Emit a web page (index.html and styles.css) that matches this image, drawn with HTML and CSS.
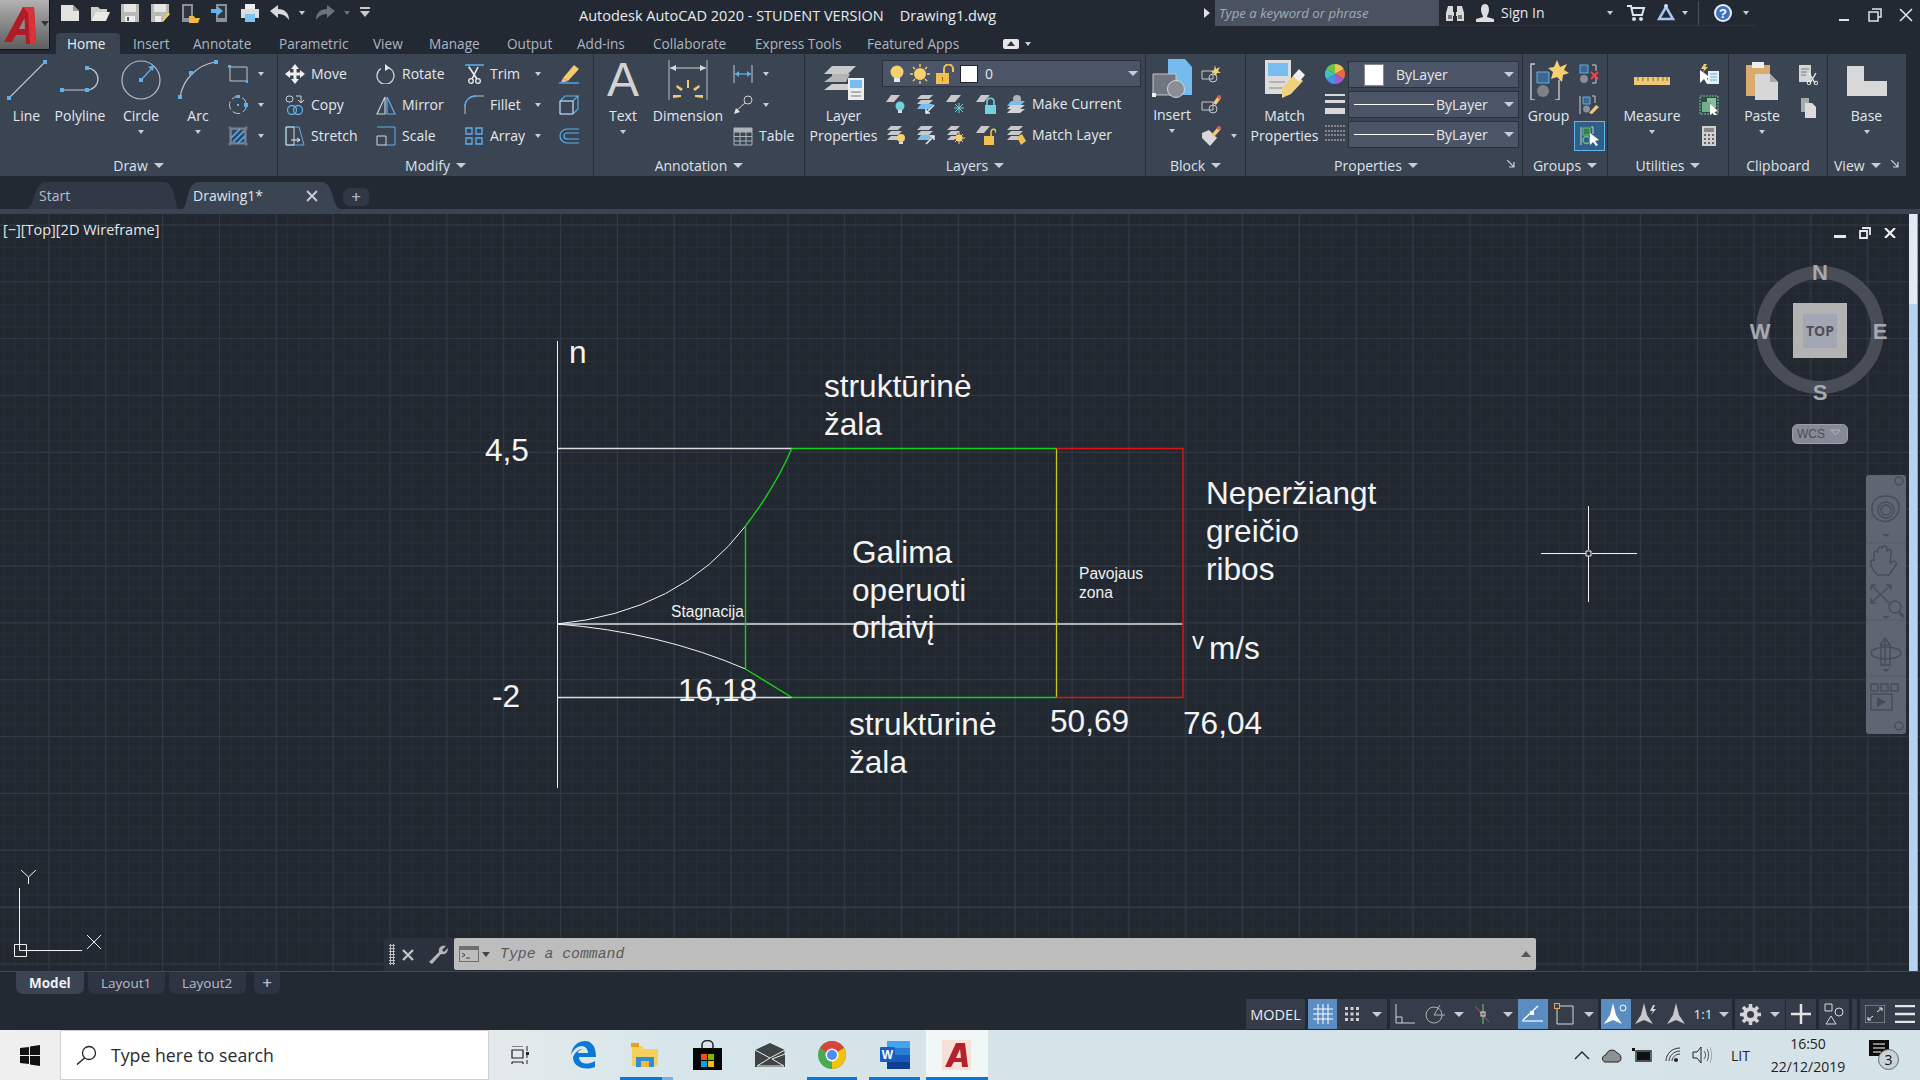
FILE: index.html
```html
<!DOCTYPE html>
<html lang="en">
<head>
<meta charset="utf-8">
<title>Autodesk AutoCAD 2020</title>
<link rel="stylesheet" href="styles.css">
</head>
<body>
<div class="app">

<header class="titlebar">
  <div class="logo">
    <svg width="36" height="42" viewBox="0 0 36 42"><path d="M1 38 L20 3 H31 L33 40 H23 L22.500 31 H13 L9 38Z" fill="#b01c26"/><path d="M20 3 H31 L33 40 H27 L25 9 Z" fill="#d8323a"/><path d="M16 25 H22 L21.500 14Z" fill="#8b8b8b"/></svg>
    <span class="caret dark"></span>
  </div>
  <div class="qa">
    <svg class="i20" viewBox="0 0 20 20"><path d="M1 2H13L19 8V18H1Z" fill="#e3e3df"/><path d="M13 2V8H19" fill="#9a9a96"/></svg>
    <svg class="i20" viewBox="0 0 20 20"><path d="M1 4H8L10 6H17V9H5L1 18Z" fill="#cfcfcb"/><path d="M5 9H20L16 18H1Z" fill="#e9e9e5"/></svg>
    <svg class="i20" viewBox="0 0 20 20"><path d="M1 1H19V19H1Z" fill="#b9b9b5"/><path d="M4 1H16V9H4Z" fill="#e6e6e2"/><path d="M5 13H15V19H5Z" fill="#ececec"/><path d="M7 14H9V18H7Z" fill="#555"/></svg>
    <svg class="i20" viewBox="0 0 20 20"><path d="M1 1H19V12L12 19H1Z" fill="#b9b9b5"/><path d="M4 1H16V9H4Z" fill="#e6e6e2"/><path d="M5 13H11V19H5Z" fill="#ececec"/><path d="M11 18L18 9L20 11L13 19Z" fill="#f2c268"/></svg>
    <svg class="i20" viewBox="0 0 20 20"><path d="M2 1H13V19H2Z" fill="#8d9095"/><path d="M4 3H11V15H4Z" fill="#30363f"/><path d="M9 13H14L15 15H20L18 20H9Z" fill="#f0b840"/></svg>
    <svg class="i20" viewBox="0 0 20 20"><path d="M6 1H17V19H6Z" fill="#8d9095"/><path d="M8 3H15V15H8Z" fill="#30363f"/><path d="M1 6H7V3L13 8L7 13V10H1Z" fill="#5fb4ee"/></svg>
    <svg class="i20" viewBox="0 0 20 20"><path d="M5 1H15V6H5Z" fill="#eee"/><path d="M1 6H19V15H1Z" fill="#dcdcdc"/><path d="M5 11H15V19H5Z" fill="#7cc3f2"/></svg>
    <svg class="i20" viewBox="0 0 20 20"><path d="M0 8L8 2V6C15 6 19 10 19 17C16 13 13 11 8 11V15Z" fill="#d8d8d8"/></svg>
    <span class="caret m4"></span>
    <svg class="i20 gap-l" viewBox="0 0 20 20"><path d="M20 8L12 2V6C5 6 1 10 1 17C4 13 7 11 12 11V15Z" fill="#6c727b"/></svg>
    <span class="caret dim m4"></span>
    <svg class="i10 gap-m" viewBox="0 0 10 12"><path d="M0 0H10V2H0Z M0 4H10L5 10Z" fill="#c9c9c9"/></svg>
  </div>
  <div class="window-title"><span>Autodesk AutoCAD 2020 - STUDENT VERSION</span><span>Drawing1.dwg</span></div>
  <div class="title-right">
    <span class="tri-r"></span>
    <div class="search">Type a keyword or phrase</div>
    <div class="userbar">
      <svg class="i20" viewBox="0 0 20 20"><path d="M3 3H8V9H9V13H8V18H1V10Z M12 3H17L19 10V18H12V13H11V9H12Z" fill="#d8d8d8"/><path d="M3 12H7V16H3Z M13 12H17V16H13Z" fill="#777"/></svg>
      <svg class="i20" viewBox="0 0 20 20"><path d="M10 1C13 1 14 4 14 7C14 10 12 12 12 14L19 16V19H1V16L8 14C8 12 6 10 6 7C6 4 7 1 10 1Z" fill="#dedede"/></svg>
      <span class="signin">Sign In</span>
      <span class="caret"></span>
      <svg class="i20 cart" viewBox="0 0 20 20"><path d="M1 3H5L7 12H16L18 5H6" fill="none" stroke="#dfe6ee" stroke-width="2"/><circle cx="8" cy="16" r="2" fill="#cfe0f2"/><circle cx="15" cy="16" r="2" fill="#cfe0f2"/></svg>
      <svg class="i20" viewBox="0 0 20 20"><path d="M10 4L17 16H3Z" fill="none" stroke="#a9c6ec" stroke-width="2.500"/><circle cx="10" cy="3" r="2" fill="#cfe0f2"/></svg>
      <span class="caret tri-c"></span>
      <i class="vsep"></i>
      <svg class="i20" viewBox="0 0 20 20"><circle cx="10" cy="10" r="9" fill="#e9eef5"/><circle cx="10" cy="10" r="7" fill="#3f6fc0"/><text x="10" y="15" class="qmark">?</text></svg>
      <span class="caret"></span>
    </div>
    <div class="winbtns">
      <svg class="i14" viewBox="0 0 14 14"><path d="M2 11H12V13H2Z" fill="#dfe3e8"/></svg>
      <svg class="i14" viewBox="0 0 14 14"><path d="M4 1H13V9H10M1 4H10V13H1Z" fill="none" stroke="#dfe3e8" stroke-width="1.500"/></svg>
      <svg class="i14" viewBox="0 0 14 14"><path d="M1 1L13 13M13 1L1 13" stroke="#e6eaee" stroke-width="1.500"/></svg>
    </div>
  </div>
</header>

<nav class="ribbon-tabs">
  <span class="rtab on">Home</span><span class="rtab">Insert</span><span class="rtab">Annotate</span><span class="rtab">Parametric</span><span class="rtab">View</span><span class="rtab">Manage</span><span class="rtab">Output</span><span class="rtab">Add-ins</span><span class="rtab">Collaborate</span><span class="rtab">Express Tools</span><span class="rtab">Featured Apps</span>
  <span class="rtab-more"><svg width="16" height="10" viewBox="0 0 16 10"><rect width="16" height="10" rx="2" fill="#e6e6e6"/><path d="M8 2L12 7H4Z" fill="#333"/></svg><span class="caret"></span></span>
</nav>

<section class="ribbon">

  <div class="panel draw">
    <div class="body">
      <div class="big"><svg class="i40" viewBox="0 0 40 40"><path d="M2 38L38 2" stroke="#b7bcc3" stroke-width="1.200"/><path d="M0 36H4V40H0Z M36 0H40V4H36Z" fill="#5db0ec"/></svg><span class="lb">Line</span></div>
      <div class="big"><svg class="i40" viewBox="0 0 40 40"><path d="M2 30H27A11 11 0 0 0 27 8" fill="none" stroke="#c6cacf" stroke-width="1.200"/><path d="M0 28H4V32H0Z M25 28H29V32H25Z M25 6H29V10H25Z" fill="#5db0ec"/></svg><span class="lb">Polyline</span></div>
      <div class="big"><svg class="i40" viewBox="0 0 40 40"><circle cx="20" cy="20" r="19" fill="none" stroke="#b7bcc3" stroke-width="1.200"/><path d="M20 20L32 7" stroke="#5db0ec" stroke-width="1.300"/><path d="M33 5L32 11L27 7Z M18 18H22V22H18Z" fill="#5db0ec"/></svg><span class="lb">Circle</span><span class="caret"></span></div>
      <div class="big"><svg class="i40" viewBox="0 0 40 40"><path d="M2 37C5 20 18 5 38 2" fill="none" stroke="#c0c4ca" stroke-width="1.200"/><path d="M0 35H4V39H0Z M11 11H15V15H11Z M36 0H40V4H36Z" fill="#5db0ec"/></svg><span class="lb">Arc</span><span class="caret"></span></div>
      <div class="stack pad7">
        <div class="tool"><svg class="i20" viewBox="0 0 20 20"><path d="M2 3H19V17H2Z" fill="none" stroke="#c0c4ca"/><path d="M0 1H3V4H0Z M18 16H21V19H18Z" fill="#5db0ec"/></svg><span class="caret m4"></span></div>
        <div class="tool"><svg class="i20" viewBox="0 0 20 20"><circle cx="10" cy="10" r="8.500" fill="none" stroke="#c0c4ca" stroke-dasharray="8 3"/><path d="M9 9H11V11H9Z M16 8H20V12H16Z" fill="#5db0ec"/><path d="M8 0H12V3H8Z" fill="#5db0ec"/></svg><span class="caret m4"></span></div>
        <div class="tool"><svg class="i20" viewBox="0 0 20 20"><path d="M3 3H17V17H3Z" fill="#2d4a6a" stroke="#9aa0a8"/><path d="M3 12L12 3M5 16L16 5M10 17L17 10" stroke="#5db0ec" stroke-width="1.500"/><path d="M0 2H20M2 0V20M18 0V20M0 18H20" stroke="#9aa0a8" stroke-width=".7"/></svg><span class="caret m4"></span></div>
      </div>
    </div>
    <div class="pt">Draw<span class="caret lg"></span></div>
  </div>

  <div class="panel modify">
    <div class="body grid-tools">
      <div class="tool"><svg class="i20" viewBox="0 0 20 20"><path d="M10 0L14 5H11.500V8.500H15V6L20 10L15 14V11.500H11.500V15H14L10 20L6 15H8.500V11.500H5V14L0 10L5 6V8.500H8.500V5H6Z" fill="#f0f0f0"/></svg><span>Move</span></div>
      <div class="tool"><svg class="i20" viewBox="0 0 20 20"><path d="M13 4A8.500 8.500 0 1 1 5 4.500" fill="none" stroke="#cfd2d6" stroke-width="1.300"/><path d="M9 0L14 4L9 7Z" fill="#e6e6e6"/></svg><span>Rotate</span></div>
      <div class="tool"><svg class="i20" viewBox="0 0 20 20"><path d="M1 1H20" stroke="#5db0ec" stroke-width="1.500"/><path d="M5 1V5" stroke="#5db0ec"/><path d="M5 3L13 15M14 3L8 15" stroke="#ededed" stroke-width="1.600"/><circle cx="7" cy="17" r="2.300" fill="none" stroke="#ededed" stroke-width="1.300"/><circle cx="14" cy="17" r="2.300" fill="none" stroke="#ededed" stroke-width="1.300"/></svg><span>Trim</span><span class="caret push"></span></div>
      <div class="tool"><svg class="i20" viewBox="0 0 20 20"><path d="M4 14L15 1L20 5L9 17Z" fill="#f3c96b"/><path d="M4 14L9 17L6 18H2Z" fill="#f1b5a5"/><path d="M0 19H20" stroke="#5db0ec" stroke-width="1.300"/></svg></div>

      <div class="tool"><svg class="i20" viewBox="0 0 20 20"><rect x="1" y="1" width="7" height="6" rx="3" fill="none" stroke="#d0d0d0"/><path d="M11 1H16V7M13 5L16 8L19 5" fill="none" stroke="#d8d8d8"/><circle cx="7" cy="15" r="4.500" fill="none" stroke="#5db0ec" stroke-width="1.300"/><circle cx="13" cy="15" r="4.500" fill="none" stroke="#5db0ec" stroke-width="1.300"/></svg><span>Copy</span></div>
      <div class="tool"><svg class="i20" viewBox="0 0 20 20"><path d="M9 2V19H1Z" fill="none" stroke="#d0d0d0" stroke-width="1.200"/><path d="M11 2V19H19Z" fill="none" stroke="#5db0ec" stroke-width="1.200"/></svg><span>Mirror</span></div>
      <div class="tool"><svg class="i20" viewBox="0 0 20 20"><path d="M1 19V11C1 5 6 1 12 1H20" fill="none" stroke="#c0c4ca"/><path d="M1 12C1 5 6 1 12 1" fill="none" stroke="#5db0ec" stroke-width="1.300"/></svg><span>Fillet</span><span class="caret push"></span></div>
      <div class="tool"><svg class="i20" viewBox="0 0 20 20"><path d="M1 6H14V19H1Z M1 6L6 1H19L14 6M19 1V14L14 19" fill="none" stroke="#5db0ec" stroke-width="1.100"/><path d="M1 6H14V19H1Z" fill="none" stroke="#c5c9ce"/></svg></div>

      <div class="tool"><svg class="i20" viewBox="0 0 20 20"><path d="M1 1H14L19 19H1Z" fill="none" stroke="#5db0ec"/><path d="M1 1H9V19H1Z" fill="none" stroke="#d8d8d8"/><path d="M6 14H15M12 12L15 14L12 16" fill="none" stroke="#ededed"/></svg><span>Stretch</span></div>
      <div class="tool"><svg class="i20" viewBox="0 0 20 20"><path d="M1 1H19V19H9" fill="none" stroke="#5db0ec"/><path d="M1 10H10V19H1Z" fill="none" stroke="#d8d8d8"/></svg><span>Scale</span></div>
      <div class="tool"><svg class="i20" viewBox="0 0 20 20"><path d="M2 2H8V8H2Z M12 2H18V8H12Z M12 12H18V18H12Z" fill="none" stroke="#5db0ec" stroke-width="1.300"/><path d="M2 12H8V18H2Z" fill="none" stroke="#5db0ec" stroke-width="1.300"/></svg><span>Array</span><span class="caret push"></span></div>
      <div class="tool"><svg class="i20" viewBox="0 0 20 20"><path d="M20 3H8A7 7 0 0 0 8 17H20M20 7H8A3 3 0 0 0 8 13H20" fill="none" stroke="#5db0ec" stroke-width="1.200"/></svg></div>
    </div>
    <div class="pt">Modify<span class="caret lg"></span></div>
  </div>

  <div class="panel annotation">
    <div class="body">
      <div class="big"><span class="glyph-a">A</span><span class="lb">Text</span><span class="caret"></span></div>
      <div class="big"><svg class="i40" viewBox="0 0 40 40"><path d="M1 0V40M39 0V40" stroke="#b7bcc3"/><path d="M2 8H38" stroke="#d0d0d0"/><path d="M2 8L8 5V11Z M38 8L32 5V11Z" fill="#d8d8d8"/><path d="M19 20H21L21 28H19Z" fill="#f3c96b"/><path d="M9 25L15 29L13 31L8 27Z M31 25L25 29L27 31L32 27Z M5 35H13V37L5 38Z M35 35H27V37L35 38Z" fill="#f3c96b"/></svg><span class="lb">Dimension</span></div>
      <div class="stack pad9">
        <div class="tool"><svg class="i20" viewBox="0 0 20 20"><path d="M1 1V19M19 1V19" stroke="#c5c9ce"/><path d="M2 10H18" stroke="#5db0ec" stroke-width="1.300"/><path d="M2 10L6 7V13Z M18 10L14 7V13Z" fill="#5db0ec"/></svg><span class="caret m4"></span></div>
        <div class="tool"><svg class="i20" viewBox="0 0 20 20"><circle cx="15" cy="5" r="4" fill="none" stroke="#d0d0d0"/><path d="M12 8L3 16" stroke="#d0d0d0"/><path d="M1 19L3 13L7 17Z" fill="#e0e0e0"/></svg><span class="caret m4"></span></div>
        <div class="tool"><svg class="i20" viewBox="0 0 20 20"><path d="M1 2H19V19H1Z M1 6H19M1 10.500H19M1 15H19M7 6V19M13 6V19" fill="none" stroke="#aeb2b8"/><path d="M1 2H19V6H1Z" fill="#aeb2b8"/></svg><span>Table</span></div>
      </div>
    </div>
    <div class="pt">Annotation<span class="caret lg"></span></div>
  </div>

  <div class="panel layers">
    <div class="body">
      <div class="big"><svg class="i40" viewBox="0 0 40 40"><path d="M8 6H32L24 14H0Z" fill="#c9c9c9"/><path d="M8 14H26L22 22H0L8 16Z" fill="#b5b5b5"/><path d="M8 24H24V30H0Z" fill="#d0d0d0"/><path d="M24 18H40V40H24Z" fill="#ededed"/><path d="M26 20H38V28H26Z" fill="#76bdf0"/><path d="M27 32H37M27 36H37" stroke="#777"/></svg><span class="lb tight">Layer<br>Properties</span></div>
      <div class="layer-col">
        <div class="combo layer-combo">
          <svg class="i16" viewBox="0 0 16 18"><circle cx="8" cy="7" r="6.500" fill="#f7d070"/><path d="M5 13H11V17H5Z" fill="#e6e6e6"/></svg>
          <svg class="i20" viewBox="0 0 20 20"><circle cx="10" cy="10" r="6" fill="#f7d070"/><path d="M10 0V3M10 17V20M0 10H3M17 10H20M3 3L5 5M15 15L17 17M17 3L15 5M5 15L3 17" stroke="#f7d070" stroke-width="1.400"/></svg>
          <svg class="i20" viewBox="0 0 20 20"><path d="M1 9H14V20H1Z" fill="#f0c14e"/><path d="M9 9V5C9 -1 18 -1 18 5V8" fill="none" stroke="#f0c14e" stroke-width="2"/><path d="M7 13H8V17H7Z" fill="#8a6a20"/></svg>
          <span class="swatch"></span><span class="num">0</span><span class="caret lg push"></span>
        </div>
        <div class="layer-row">
          <svg class="i20" viewBox="0 0 20 20"><path d="M5 1H14L8 8H0Z" fill="#c9c9c9"/><circle cx="14" cy="12" r="4.500" fill="#6fd2e0"/><path d="M12 16H16V19H12Z" fill="#ddd"/></svg>
          <svg class="i20" viewBox="0 0 20 20"><path d="M5 1H17L13 5H1Z M5 6H17L13 10H1Z" fill="#c9c9c9"/><path d="M5 10H17L13 15H1Z" fill="#76bdf0"/><path d="M18 11L10 19M10 15V19H14" stroke="#eee" stroke-width="1.500" fill="none"/></svg>
          <svg class="i20" viewBox="0 0 20 20"><path d="M5 1H15L9 8H0Z" fill="#c9c9c9"/><path d="M13 9V19M8 14H18M9 10L17 18M17 10L9 18" stroke="#6fd2e0"/></svg>
          <svg class="i20" viewBox="0 0 20 20"><path d="M5 1H14L8 8H0Z" fill="#c9c9c9"/><path d="M9 11H20V20H9Z" fill="#6fd2e0"/><path d="M11 11V8C11 3 18 3 18 8V11" fill="none" stroke="#6fd2e0" stroke-width="1.600"/></svg>
          <svg class="i20" viewBox="0 0 20 20"><circle cx="11" cy="5" r="4" fill="#aeb2b8"/><path d="M5 7H19L14 12H1Z" fill="#76bdf0"/><path d="M5 11H19L14 15H1Z M5 15H19L14 19H1Z" fill="#d5d5d5"/></svg>
          <span class="lr-text">Make Current</span>
        </div>
        <div class="layer-row">
          <svg class="i20" viewBox="0 0 20 20"><path d="M5 1H16L12 5H1Z M5 6H16L12 10H1Z M5 11H16L12 15H1Z" fill="#c9c9c9"/><circle cx="15" cy="13" r="4" fill="#f7d070"/><path d="M13 17H17V19H13Z" fill="#ddd"/></svg>
          <svg class="i20" viewBox="0 0 20 20"><path d="M5 1H17L13 5H1Z M5 6H17L13 10H1Z" fill="#c9c9c9"/><path d="M5 10H17L13 15H1Z" fill="#76bdf0"/><path d="M10 19L18 11M14 11H18V15" stroke="#eee" stroke-width="1.500" fill="none"/></svg>
          <svg class="i20" viewBox="0 0 20 20"><path d="M5 1H14L10 5H1Z M5 6H14L10 10H1Z M5 11H12L8 15H1Z" fill="#c9c9c9"/><circle cx="13" cy="13" r="3.500" fill="#f7d070"/><path d="M13 7V19M7 13H19M9 9L17 17M17 9L9 17" stroke="#f7d070"/></svg>
          <svg class="i20" viewBox="0 0 20 20"><path d="M5 1H14L8 8H0Z" fill="#c9c9c9"/><path d="M8 11H18V20H8Z" fill="#f0c14e"/><path d="M15 11V8C15 3 20 3 20 8" fill="none" stroke="#f0c14e" stroke-width="1.600"/></svg>
          <svg class="i20" viewBox="0 0 20 20"><path d="M5 1H17L13 5H1Z M5 6H17L13 10H1Z M5 11H17L13 15H1Z" fill="#c9c9c9"/><path d="M11 12L16 9L20 16L15 20Z" fill="#f0c14e"/></svg>
          <span class="lr-text">Match Layer</span>
        </div>
      </div>
    </div>
    <div class="pt">Layers<span class="caret lg"></span></div>
  </div>

  <div class="panel block">
    <div class="body">
      <div class="big insert"><svg class="i40" viewBox="0 0 40 40"><path d="M16 0H33L40 8V36H16Z" fill="#74bbf0"/><path d="M1 15H24V36H1Z" fill="#717780" stroke="#c8c8c8"/><circle cx="24" cy="30" r="8.500" fill="#8a8f96" stroke="#d8d8d8"/><path d="M0 34H4V38H0Z" fill="#eee"/></svg><span class="lb">Insert</span><span class="caret"></span></div>
      <div class="stack pad3">
        <div class="tool"><svg class="i20" viewBox="0 0 20 20"><path d="M1 7H12V15H1Z" fill="none" stroke="#c8c8c8"/><circle cx="12" cy="14" r="4" fill="none" stroke="#c8c8c8"/><path d="M14 1L15 5L19 3L17 7L20 9L16 9L15 12L13 9L10 8L13 6Z" fill="#f7d070"/></svg></div>
        <div class="tool"><svg class="i20" viewBox="0 0 20 20"><path d="M1 7H12V15H1Z" fill="none" stroke="#c8c8c8"/><circle cx="12" cy="14" r="4" fill="none" stroke="#c8c8c8"/><path d="M12 8L17 1L20 3L15 10Z" fill="#f3c96b"/><circle cx="18" cy="2" r="2" fill="#e05a5a"/></svg></div>
        <div class="tool"><svg class="i20" viewBox="0 0 20 20"><path d="M1 7L8 4L16 12L9 20L1 12Z" fill="#d8d8d8"/><path d="M10 9L17 1L20 3L13 11Z" fill="#f3c96b"/><circle cx="18" cy="2" r="2" fill="#e05a5a"/></svg><span class="caret m4"></span></div>
      </div>
    </div>
    <div class="pt">Block<span class="caret lg"></span></div>
  </div>

  <div class="panel properties">
    <div class="body">
      <div class="big"><svg class="i40" viewBox="0 0 40 40"><path d="M0 0H26V34H0Z" fill="#dcdcdc"/><path d="M3 3H23V16H3Z" fill="#76bdf0"/><path d="M4 22H20M4 28H20" stroke="#888"/><path d="M17 28L30 14L38 21L26 34L17 38Z" fill="#f0d27a"/><path d="M28 16L34 9L40 15L34 22Z" fill="#eee"/></svg><span class="lb tight">Match<br>Properties</span></div>
      <div class="prop-grid">
        <svg class="i20" viewBox="0 0 20 20"><path d="M10 10L10 0A10 10 0 0 1 18.700 5Z" fill="#f2c14e"/><path d="M10 10L18.700 5A10 10 0 0 1 18.700 15Z" fill="#e8684a"/><path d="M10 10L18.700 15A10 10 0 0 1 10 20Z" fill="#a05ad0"/><path d="M10 10L10 20A10 10 0 0 1 1.300 15Z" fill="#4a8fe0"/><path d="M10 10L1.300 15A10 10 0 0 1 1.300 5Z" fill="#42c0c8"/><path d="M10 10L1.300 5A10 10 0 0 1 10 0Z" fill="#6cc24a"/></svg>
        <div class="combo pc"><span class="swatch big-sw"></span><span class="bl-1">ByLayer</span><span class="caret lg push"></span></div>
        <svg class="i20" viewBox="0 0 20 20"><path d="M0 0H20V2H0Z M0 6H20V9H0Z M0 14H20V20H0Z" fill="#d8d8d8"/></svg>
        <div class="combo pc"><i class="ln"></i><span>ByLayer</span><span class="caret lg push"></span></div>
        <svg class="i20" viewBox="0 0 20 20"><path d="M0 2H20M0 7H20M0 11H20M0 16H20" stroke="#9a9a9a" stroke-dasharray="2 1" stroke-width="1.300"/></svg>
        <div class="combo pc"><i class="ln"></i><span>ByLayer</span><span class="caret lg push"></span></div>
      </div>
    </div>
    <div class="pt shift">Properties<span class="caret lg"></span><svg class="launch" width="8" height="8" viewBox="0 0 8 8"><path d="M0 0L7 7M7 2V7H2" fill="none" stroke="#ccd" stroke-width="1.200"/></svg></div>
  </div>

  <div class="panel groups">
    <div class="body">
      <div class="big"><svg class="i40" viewBox="0 0 40 40"><path d="M6 4H2V40H6M26 40H30V20" fill="none" stroke="#d0d0d0" stroke-width="1.300"/><path d="M8 12H20V23H8Z" fill="#3d678f" stroke="#5db0ec"/><circle cx="14" cy="31" r="6" fill="#7d8288"/><path d="M28 0L31 7L38 4L35 10L40 13L34 15L33 22L28 17L22 19L24 12L19 8L25 7Z" fill="#f7d070"/></svg><span class="lb">Group</span></div>
      <div class="stack pad5">
        <div class="tool"><svg class="i20" viewBox="0 0 20 20"><path d="M1 1H9V9H1Z" fill="#3d678f" stroke="#5db0ec"/><circle cx="5" cy="15" r="4" fill="#8a8f96"/><path d="M13 1H17V7M17 13V19H13" fill="none" stroke="#d0d0d0"/><path d="M12 8L19 15M19 8L12 15" stroke="#e64a4a" stroke-width="1.800"/></svg></div>
        <div class="tool"><svg class="i20" viewBox="0 0 20 20"><path d="M1 1V19M13 1H16V8" fill="none" stroke="#d0d0d0"/><path d="M4 2H11V9H4Z" fill="#3d678f" stroke="#5db0ec"/><circle cx="7.500" cy="14" r="3.500" fill="#8a8f96"/><path d="M10 18L17 10L20 12L13 19Z" fill="#f3c96b"/></svg></div>
        <div class="tool sel"><svg class="i20" viewBox="0 0 20 20"><path d="M2 1V19M12 1H14V8" fill="none" stroke="#d0d0d0"/><path d="M4 2H11V9H4Z" fill="#3d7a4d" stroke="#60c080"/><circle cx="7.500" cy="14" r="3.500" fill="none" stroke="#60c080" stroke-width="1.500"/><path d="M11 7V19L14 16L17 20L19 19L16 15L20 14Z" fill="#fff"/></svg></div>
      </div>
    </div>
    <div class="pt">Groups<span class="caret lg"></span></div>
  </div>

  <div class="panel utilities">
    <div class="body">
      <div class="big"><svg class="i40 wide" viewBox="0 0 40 40"><path d="M2 17H38V25H2Z" fill="#f0c678"/><path d="M6 17V21M11 17V21M16 17V21M21 17V21M26 17V21M31 17V21M35 17V21" stroke="#8a6a30"/></svg><span class="lb">Measure</span><span class="caret"></span></div>
      <div class="stack pad3">
        <div class="tool"><svg class="i20" viewBox="0 0 20 20"><path d="M9 7H20V20H9Z" fill="#e8eef3"/><path d="M11 10H18M11 13H18M11 16H18" stroke="#5db0ec"/><path d="M1 6V19L5 15L8 20L10 19L8 14H12Z" fill="#fff"/><path d="M5 0L2 5H5L4 8L9 3H6L8 0Z" fill="#f7d070"/></svg></div>
        <div class="tool"><svg class="i20" viewBox="0 0 20 20"><path d="M1 1H19V19H1Z" fill="none" stroke="#5fcf80" stroke-dasharray="2 1"/><path d="M8 3H17V13H8Z" fill="#8dbd9c"/><path d="M3 7H12V17H3Z" fill="#6fb084"/><path d="M11 9V20L13.500 18L16 21L18 20L15.500 17L19 16Z" fill="#fff"/></svg></div>
        <div class="tool"><svg class="i20" viewBox="0 0 20 20"><path d="M3 0H17V20H3Z" fill="#d0d0d0"/><path d="M5 2H15V6H5Z" fill="#888"/><path d="M5 8H7V10H5Z M9 8H11V10H9Z M13 8H15V10H13Z M5 12H7V14H5Z M9 12H11V14H9Z M13 12H15V14H13Z M5 16H7V18H5Z M9 16H11V18H9Z M13 16H15V18H13Z" fill="#666"/></svg></div>
      </div>
    </div>
    <div class="pt">Utilities<span class="caret lg"></span></div>
  </div>

  <div class="panel clipboard">
    <div class="body">
      <div class="big"><svg class="i40" viewBox="0 0 40 40"><path d="M4 5H28V36H4Z" fill="#d9ab6d"/><path d="M10 2H22V8H10Z" fill="#ededed"/><path d="M13 14H28L36 22V40H13Z" fill="#d7d7d7"/><path d="M28 14V22H36" fill="#a9a9a9"/></svg><span class="lb">Paste</span><span class="caret"></span></div>
      <div class="stack pad3 clip-stack">
        <div class="tool"><svg class="i20" viewBox="0 0 20 20"><path d="M1 0H13V17H1Z" fill="#d5d5d5"/><path d="M3 4H11M3 7H9M3 10H8" stroke="#777"/><path d="M11 8L17 18M18 8L12 18" stroke="#eee" stroke-width="1.400"/><circle cx="11" cy="18" r="1.800" fill="none" stroke="#eee"/><circle cx="18" cy="18" r="1.800" fill="none" stroke="#eee"/></svg></div>
        <div class="tool"><svg class="i20" viewBox="0 0 20 20"><path d="M3 0H11V14H3Z" fill="#aaa"/><path d="M7 5H14L18 9V20H7Z" fill="#dcdcdc"/></svg></div>
      </div>
    </div>
    <div class="pt">Clipboard</div>
  </div>

  <div class="panel viewp">
    <div class="body">
      <div class="big"><svg class="i40" viewBox="0 0 40 40"><path d="M0 6H17V21H40V36H0Z" fill="#d8d8d8"/></svg><span class="lb">Base</span><span class="caret"></span></div>
    </div>
    <div class="pt left">View<span class="caret lg"></span><svg class="launch" width="8" height="8" viewBox="0 0 8 8"><path d="M0 0L7 7M7 2V7H2" fill="none" stroke="#ccd" stroke-width="1.200"/></svg></div>
  </div>

</section>

<div class="doc-tabs">
  <div class="dtab start">Start</div>
  <div class="dtab cur">Drawing1*<svg class="dx" width="12" height="12" viewBox="0 0 12 12"><path d="M1 1L11 11M11 1L1 11" stroke="#c6cad0" stroke-width="2"/></svg></div>
  <div class="dtab plus">+</div>
</div>
<div class="strip"></div>

<main class="canvas">
  <svg class="cad" viewBox="0 214 1909 757" width="1909" height="757">
    <path class="c-red" d="M0 907.500H1909"/>
    <path class="c-w2" d="M557.500 448.500H792M557.500 697.500H792M557.500 624H1183"/>
    <path class="c-w" d="M557.500 341V788M557 624Q680 612 745.500 526M557 624Q660 632 745.500 669"/>
    <path class="c-g" d="M745.500 526Q776 486 792 448M745.500 526V669M745.500 669L792 697.500M792 448.500H1056.500M792 697.500H1056.500"/>
    <path class="c-y" d="M1056.500 448.500V697.500"/>
    <path class="c-r" d="M1056.500 448.500H1183V697.500H1056.500"/>
    <text class="t" x="569" y="363">n</text>
    <text class="t" x="485" y="461">4,5</text>
    <text class="t" x="492" y="707">-2</text>
    <text class="t" x="824" y="397">struktūrinė</text>
    <text class="t" x="824" y="435">žala</text>
    <text class="t" x="852" y="563">Galima</text>
    <text class="t" x="852" y="601">operuoti</text>
    <text class="t" x="852" y="638">orlaivį</text>
    <text class="t" x="678" y="701">16,18</text>
    <text class="t" x="849" y="735">struktūrinė</text>
    <text class="t" x="849" y="773">žala</text>
    <text class="t" x="1050" y="732">50,69</text>
    <text class="t" x="1183" y="734">76,04</text>
    <text class="t" x="1206" y="504">Neperžiangt</text>
    <text class="t" x="1206" y="542">greičio</text>
    <text class="t" x="1206" y="580">ribos</text>
    <text class="t-v" x="1192" y="649">v</text>
    <text class="t" x="1209" y="659">m/s</text>
    <text class="s" x="671" y="617">Stagnacija</text>
    <text class="s" x="1079" y="579">Pavojaus</text>
    <text class="s" x="1079" y="598">zona</text>
    <path class="c-w" d="M19.500 888V950.500H82M14.500 944.500H26.500V956.500H14.500ZM21 870L28.500 877L36 870M28.500 877V884M87 935L101 949M101 935L87 949"/>
    <path class="c-w" d="M1541 553.500H1586M1592 553.500H1637M1588.500 506V550M1588.500 556V602M1586 551H1591V556H1586Z"/>
  </svg>
  <div class="vp-label">[−][Top][2D Wireframe]</div>
  <div class="vp-ctrl">
    <svg width="12" height="10" viewBox="0 0 12 10"><path d="M0 7H12V10H0Z" fill="#e8e8e8"/></svg>
    <svg width="12" height="12" viewBox="0 0 12 12"><path d="M3 1H11V8M1 4H8V11H1Z" fill="none" stroke="#e8e8e8" stroke-width="1.800"/></svg>
    <svg width="12" height="10" viewBox="0 0 12 10"><path d="M1 0L11 10M11 0L1 10" stroke="#eee" stroke-width="2.200"/></svg>
  </div>
  <svg class="viewcube" viewBox="0 0 140 200" width="140" height="200">
    <circle cx="70" cy="70" r="57.500" class="vc-ring"/>
    <rect x="43" y="43" width="54" height="55" fill="#b3b3b3"/>
    <rect x="53" y="54" width="34" height="34" fill="#a3a7b3"/>
    <text x="70" y="76" class="vc-top">TOP</text>
    <text x="70" y="20" class="vc-l">N</text>
    <text x="10" y="79" class="vc-l">W</text>
    <text x="130" y="79" class="vc-l">E</text>
    <text x="70" y="140" class="vc-l">S</text>
    <rect x="42.500" y="164.500" width="55" height="19" rx="5" fill="#868a96" stroke="#9a9ea9"/>
    <text x="47" y="178" class="vc-wcs">WCS</text>
    <path d="M81 170H90L85.500 175Z" fill="none" stroke="#b3b6c0"/>
  </svg>
  <svg class="navbar" viewBox="0 0 40 259" width="40" height="259">
    <rect width="40" height="259" rx="3" fill="#5f6671"/>
    <g fill="none" stroke="#484e59" stroke-width="1.500">
      <circle cx="33" cy="6" r="4"/>
      <path d="M6 36C5 24 13 21 20 21C30 21 34 27 33 34C31 44 22 48 16 46C10 45 6 41 6 36Z"/><circle cx="20" cy="35" r="8"/><circle cx="20" cy="35" r="5"/>
      <path d="M6 93C3 85 7 83 8 86V78C9 75 12 76 12 78V74C13 71 16 71 16 74V73C17 70 20 70 21 73V76C23 73 26 75 25 78L24 88C28 85 32 86 30 90L23 100H11Z"/>
      <path d="M5 110L23 128M25 110L5 128M5 110H10M5 110V115M25 110H20M25 110V115M5 128V123M5 128H10"/><circle cx="29" cy="132" r="6"/><path d="M33 137L38 142" stroke-width="2.500"/>
      <path d="M19 165V190M14 170L19 163L24 170"/><ellipse cx="20" cy="178" rx="15" ry="6"/><rect x="15" y="170" width="9" height="20"/>
      <rect x="5" y="209" width="7" height="7"/><rect x="15" y="209" width="7" height="7"/><rect x="25" y="209" width="7" height="7"/><rect x="5" y="219" width="21" height="16"/>
      <circle cx="33" cy="251" r="4"/>
    </g>
    <path d="M11 222L20 227L11 232Z M16 59H24L20 62Z M16 141H24L20 144Z M16 194H24L20 197Z" fill="#484e59"/>
    <path d="M0 68H40M0 145H40M0 201H40" stroke="#565c67"/>
  </svg>
  <div class="cmdline">
    <div class="cmd-tools">
      <span class="grip"></span>
      <svg width="12" height="12" viewBox="0 0 12 12"><path d="M1 1L11 11M11 1L1 11" stroke="#c0c0c0" stroke-width="2.400"/></svg>
      <svg width="20" height="20" viewBox="0 0 20 20"><path d="M1 17L11 7C10 3 13 0 18 1L14 5L16 7L20 3C20 8 17 10 13 9L4 19Z" fill="#b5b5b5"/></svg>
    </div>
    <div class="cmd-input">
      <svg width="20" height="16" viewBox="0 0 20 16"><path d="M0 0H20V16H0Z" fill="#6e6e6e"/><path d="M1 4H19V15H1Z" fill="#bdbdbd"/><path d="M3 7L6 9L3 11M7 12H11" fill="none" stroke="#444"/></svg>
      <span class="caret cmd-c"></span>
      <span class="cmd-text">Type a command</span>
      <span class="cmd-up"></span>
    </div>
  </div>
  <div class="scroll"><i></i></div>
</main>

<footer class="bottom">
  <div class="layout-tabs">
    <span class="ltab on">Model</span><span class="ltab">Layout1</span><span class="ltab">Layout2</span><span class="ltab add">+</span>
  </div>
  <div class="status">
    <div class="sp w59"><span class="model">MODEL</span></div>
    <div class="sp">
      <span class="st act w29"><svg width="20" height="20" viewBox="0 0 20 20"><path d="M5 0V20M10 0V20M15 0V20M0 5H20M0 10H20M0 15H20" stroke="#fff"/></svg></span>
      <span class="st"><svg width="16" height="16" viewBox="0 0 16 16"><path d="M1 1H4V4H1Z M6.500 1H9.500V4H6.500Z M12 1H15V4H12Z M1 6.500H4V9.500H1Z M6.500 6.500H9.500V9.500H6.500Z M12 6.500H15V9.500H12Z M1 12H4V15H1Z M6.500 12H9.500V15H6.500Z M12 12H15V15H12Z" fill="#d0d0d0"/></svg></span>
      <span class="st c"><span class="caret lg"></span></span>
    </div>
    <div class="sp">
      <span class="st"><svg width="20" height="20" viewBox="0 0 20 20"><path d="M1 0V19H20M1 13H7V19" fill="none" stroke="#d0d0d0"/></svg></span>
      <span class="st"><svg width="20" height="20" viewBox="0 0 20 20"><circle cx="9" cy="11" r="8" fill="none" stroke="#b0b0b0"/><path d="M9 11H20M9 11L15 1" stroke="#b0b0b0"/></svg></span>
      <span class="st c n18"><span class="caret lg"></span></span>
      <span class="st"><svg width="16" height="20" viewBox="0 0 16 20"><path d="M8 0V20" stroke="#5fcf80"/><path d="M0 2L14 18" stroke="#d05050"/><rect x="6" y="8" width="4" height="4" fill="none" stroke="#ddd"/></svg></span>
      <span class="st c"><span class="caret lg"></span></span>
      <span class="st act"><svg width="22" height="20" viewBox="0 0 22 20"><path d="M1 16L16 2" stroke="#fff" stroke-width="1.300"/><path d="M0 17H21" stroke="#b5d2ee" stroke-width="2"/><rect x="8" y="7" width="4" height="4" fill="#fff"/></svg></span>
      <span class="st w31"><svg width="20" height="22" viewBox="0 0 20 22"><path d="M3 3H19V21H3Z" fill="none" stroke="#d8d8d8"/><rect x="0.500" y="0.500" width="5" height="5" fill="#3a4350" stroke="#e8a060"/></svg></span>
      <span class="st c n19"><span class="caret lg"></span></span>
    </div>
    <div class="sp">
      <span class="st act"><svg width="24" height="22" viewBox="0 0 24 22"><path d="M9 0L12 12L18 21L9 17L0 21L6 12Z" fill="#fff"/><circle cx="19" cy="5" r="3" fill="none" stroke="#fff"/></svg></span>
      <span class="st"><svg width="22" height="22" viewBox="0 0 22 22"><path d="M9 0L12 12L18 21L9 17L0 21L6 12Z" fill="#c8c8c8"/><path d="M18 2L15 8H18L16 12L21 6H18L20 2Z" fill="#d8d8d8"/></svg></span>
      <span class="st"><svg width="18" height="22" viewBox="0 0 18 22"><path d="M9 0L12 12L18 21L9 17L0 21L6 12Z" fill="#c8c8c8"/></svg></span>
      <span class="st w24 scale">1:1</span>
      <span class="st c w17"><span class="caret lg"></span></span>
    </div>
    <div class="sp">
      <span class="st"><svg width="21" height="21" viewBox="0 0 21 21"><circle cx="10.500" cy="10.500" r="5.500" fill="none" stroke="#d5d5d5" stroke-width="4"/><path d="M10.500 0V5M10.500 16V21M0 10.500H5M16 10.500H21M3 3L6 6M15 15L18 18M18 3L15 6M6 15L3 18" stroke="#d5d5d5" stroke-width="3.500"/></svg></span>
      <span class="st c"><span class="caret lg"></span></span>
    </div>
    <div class="sp g1"><span class="st"><svg width="20" height="20" viewBox="0 0 20 20"><path d="M10 0V20M0 10H20" stroke="#e4e4e4" stroke-width="2.500"/></svg></span></div>
    <div class="sp"><span class="st"><svg width="20" height="22" viewBox="0 0 20 22"><path d="M1 1H8V8H1Z M2 21L7 13L12 21Z" fill="none" stroke="#d8d8d8"/><circle cx="15" cy="9" r="4" fill="none" stroke="#d8d8d8"/></svg></span></div>
    <div class="sp thin"></div>
    <div class="sp w60">
      <span class="st"><svg width="20" height="18" viewBox="0 0 20 18"><path d="M0 0H20V18H0Z" fill="none" stroke="#aaa"/><path d="M12 7L17 3M14 3H17V6M8 11L3 15M3 12V15H6" fill="none" stroke="#eee"/></svg></span>
      <span class="st"><svg width="20" height="18" viewBox="0 0 20 18"><path d="M0 1H20M0 9H20M0 17H20" stroke="#e4e4e4" stroke-width="2.500"/></svg></span>
    </div>
  </div>
</footer>

<div class="taskbar">
  <div class="tb-win"><svg width="20" height="21" viewBox="0 0 20 21"><path d="M0 3L9 2V10H0Z M10 1.500L20 0V10H10Z M0 11H9V19L0 18Z M10 11H20V21L10 19.500Z" fill="#111"/></svg></div>
  <div class="tb-search">
    <svg width="21" height="20" viewBox="0 0 21 20"><circle cx="13" cy="8" r="6.500" fill="none" stroke="#222" stroke-width="1.300"/><path d="M8.500 13L1 19.500" stroke="#222" stroke-width="1.500"/></svg>
    <span>Type here to search</span>
  </div>
  <div class="tb-apps">
    <span class="tapp"><svg width="20" height="18" viewBox="0 0 20 18"><path d="M2 0H13M2 4H13V12H2ZM2 16H13M2 16V18M13 16V18" fill="none" stroke="#222" stroke-width="1.200"/><path d="M17 0V18" stroke="#222" stroke-dasharray="5 2"/><rect x="16" y="6" width="3" height="3" fill="#222"/></svg></span>
    <span class="tapp"><svg width="26" height="28" viewBox="0 0 26 28"><path d="M1 14C2 5 8 0 15 0C22 0 26 6 26 16H9C9 22 16 25 25 20V26C14 30 3 26 3 16C5 11 9 8 13 8C9 9 8 11 8 12H18C18 8 15 5 12 5C7 5 3 9 1 14Z" fill="#0a78d7"/></svg></span>
    <span class="tapp run tail"><svg width="28" height="24" viewBox="0 0 28 24"><path d="M1 3H11L13 6H27V23H1Z" fill="#f7cf5d"/><path d="M0 0H8V4H0Z" fill="#e2a415"/><path d="M5 14H23V24H18V18H10V24H5Z" fill="#2f8ed6"/><path d="M10 18H18V24H10Z" fill="#f0b840"/></svg></span>
    <span class="tapp"><svg width="29" height="30" viewBox="0 0 29 30"><path d="M0 8H29V30H0Z" fill="#050505"/><path d="M9 9V5C9 -1 20 -1 20 5V9" fill="none" stroke="#222" stroke-width="1.500"/><path d="M8 14H14V20H8Z" fill="#f25022"/><path d="M15 14H21V20H15Z" fill="#7fba00"/><path d="M8 21H14V27H8Z" fill="#00a4ef"/><path d="M15 21H21V27H15Z" fill="#ffb900"/></svg></span>
    <span class="tapp"><svg width="30" height="24" viewBox="0 0 30 24"><path d="M15 0L30 7V24H0V7Z" fill="#3f4345"/><path d="M0 7L15 15L30 7L30 11L17 16L29 23L2 23L15 15" fill="none" stroke="#eceff0" stroke-width="1"/></svg></span>
    <span class="tapp run"><svg width="28" height="28" viewBox="0 0 28 28"><circle cx="14" cy="14" r="14" fill="#4aa952"/><path d="M14 14L1.900 7A14 14 0 0 1 26.100 7Z" fill="#db4437"/><path d="M14 14L26.100 7A14 14 0 0 1 14 28Z" fill="#f4c20d"/><circle cx="14" cy="14" r="6.500" fill="#fff"/><circle cx="14" cy="14" r="5" fill="#4a8cf0"/></svg></span>
    <span class="tapp run"><svg width="30" height="28" viewBox="0 0 30 28"><path d="M7 0H30V7H7Z" fill="#41a5ee"/><path d="M7 7H30V14H7Z" fill="#2b7cd3"/><path d="M7 14H30V21H7Z" fill="#185abd"/><path d="M7 21H30V28H7Z" fill="#103f91"/><rect y="6" width="15" height="15" rx="1" fill="#1c5ebf"/><text x="7.500" y="18" class="wd">W</text></svg></span>
    <span class="tapp run focus"><svg width="29" height="30" viewBox="0 0 29 30"><rect width="29" height="30" fill="#f6e0d8"/><path d="M3 27L14 3H23L26 27H20L19.500 22H12L9 27Z" fill="#b3222c"/><path d="M14 18H19L18 9Z" fill="#f6e0d8"/></svg></span>
  </div>
  <div class="tray">
    <svg width="16" height="10" viewBox="0 0 16 10"><path d="M1 9L8 2L15 9" fill="none" stroke="#222" stroke-width="1.300"/></svg>
    <svg width="20" height="16" viewBox="0 0 20 16"><path d="M3 15C-1 14 0 8 4 8C5 3 12 1 15 6C19 6 21 14 16 15Z" fill="#8f9090" stroke="#222"/></svg>
    <svg width="20" height="14" viewBox="0 0 20 14"><path d="M4 3H19V13H4Z" fill="none" stroke="#222" stroke-width="1.300"/><path d="M5 4H18V12H5Z M0 0H3V3H0Z" fill="#111"/></svg>
    <svg width="16" height="16" viewBox="0 0 16 16"><path d="M1 14C1 7 7 1 15 1M4 14C4 9 9 4 15 4M7 14C7 11 10 7 15 7" fill="none" stroke="#333"/><circle cx="11" cy="13" r="2" fill="#222"/></svg>
    <svg width="20" height="18" viewBox="0 0 20 18"><path d="M1 6H5L9 1V17L5 12H1Z" fill="none" stroke="#222"/><path d="M12 5C14 8 14 10 12 13M15 3C17 7 17 11 15 15" fill="none" stroke="#555"/><path d="M18 1C20 6 20 12 18 17" fill="none" stroke="#aaa"/></svg>
    <span class="lang">LIT</span>
    <span class="clock"><span>16:50</span><span>22/12/2019</span></span>
    <span class="notif"><svg width="20" height="20" viewBox="0 0 20 20"><path d="M0 0H20V16H0Z" fill="#0c0c0c"/><path d="M4 4H16M4 8H16M4 12H12" stroke="#fff" stroke-width="1.200"/></svg><b>3</b></span>
  </div>
</div>

</div>
</body>
</html>
```
FILE: styles.css
```css
* { box-sizing: border-box; }
html, body { margin: 0; padding: 0; width: 1920px; height: 1080px; overflow: hidden; }
body { font-family: "Open Sans", "Noto Sans", sans-serif; font-size: 14px; color: #e3e8ee; background: #222933; }
.app { display: flex; flex-direction: column; width: 1920px; height: 1080px; }
svg { display: block; flex: none; }
.i10 { width: 10px; height: 12px; }
.i14 { width: 14px; height: 14px; }
.i16 { width: 16px; height: 18px; }
.i20 { width: 20px; height: 20px; }
.i40 { width: 40px; height: 40px; }

.caret { display: inline-block; width: 0; height: 0; flex: none; border-left: 3.500px solid transparent; border-right: 3.500px solid transparent; border-top: 4px solid #c9ced6; }
.caret.lg { border-left-width: 5px; border-right-width: 5px; border-top-width: 5px; }
.caret.dark { border-top-color: #333; border-left-width: 4px; border-right-width: 4px; border-top-width: 5px; }
.caret.dim { border-top-color: #6c727b; }
.m4 { margin-left: 9px; }

/* title bar */
.titlebar { height: 33px; display: flex; align-items: flex-start; position: relative; background: #222933; }
.logo { position: absolute; left: 0; top: 0; width: 49px; height: 49px; display: flex; align-items: center; padding-left: 3px; background: linear-gradient(#b2b2b2, #8f8f8f 40%, #5f5f5f); box-shadow: 0 1px 0 #111, 1px 0 0 #111; z-index: 3; }
.logo .caret { margin: -2px 0 0 2px; }
.qa { display: flex; align-items: center; gap: 10px; margin-left: 60px; height: 26px; }
.qa .m4 { margin-left: -1px; }
.qa .gap-l { margin-left: 0; }
.qa .gap-m { margin-left: 0; }
.window-title { display: flex; gap: 16px; margin-left: 209px; height: 30px; align-items: center; font-size: 14.500px; color: #e8ebef; white-space: nowrap; }
.title-right { margin-left: auto; width: 718px; display: flex; align-items: flex-start; }
.tri-r { width: 0; height: 0; margin: 8px 5px 0 2px; border-top: 5px solid transparent; border-bottom: 5px solid transparent; border-left: 6px solid #e0e0e0; }
.search { width: 224px; height: 26px; padding-left: 4px; background: #4a5261; color: #a5abb5; font-style: italic; font-size: 13.200px; line-height: 26px; white-space: nowrap; }
.userbar { display: flex; align-items: center; height: 26px; width: 316px; padding-left: 6px; gap: 10px; border-bottom: 1px solid #30363f; }
.signin { width: 96px; color: #e6e9ed; margin-left: -4px; }
.cart { margin-left: 3px; }
.tri-c { margin-left: -4px; }
.vsep { width: 1px; height: 24px; background: #4a5261; margin: 0 4px 0 0; }
.qmark { font: bold 13px "Liberation Sans", sans-serif; fill: #fff; text-anchor: middle; }
.winbtns { display: flex; gap: 17px; margin-left: auto; padding: 8px 7px 0 0; }

/* ribbon tabs */
.ribbon-tabs { height: 21px; display: grid; grid-template-columns: 77px 60px 86px 94px 56px 78px 70px 76px 102px 112px 136px auto; padding-left: 56px; align-items: center; font-size: 13.600px; }
.rtab { color: #aeb6c0; white-space: nowrap; line-height: 21px; }
.rtab.on { width: 64px; padding-left: 11px; color: #e8ecf0; background: #3b4453; border-radius: 4px 4px 0 0; height: 21px; }
.rtab-more { display: flex; align-items: center; gap: 6px; }

/* ribbon */
.ribbon { height: 122px; width: 1906px; display: flex; background: #3b4453; }
.panel { display: flex; flex-direction: column; flex: none; border-right: 1px solid #262d38; }
.draw { width: 278px; } .modify { width: 316px; } .annotation { width: 211px; } .layers { width: 341px; } .block { width: 100px; }
.properties { width: 277px; } .groups { width: 85px; } .utilities { width: 121px; } .clipboard { width: 99px; } .viewp { width: 78px; border-right: 0; }
.body { height: 100px; display: grid; align-content: start; }
.pt { height: 22px; display: flex; align-items: center; justify-content: center; gap: 6px; color: #dde2e8; position: relative; }
.pt.shift { padding-right: 16px; }
.pt.left { justify-content: flex-start; padding-left: 6px; }
.launch { position: absolute; right: 7px; top: 6px; }
.draw .body { grid-template-columns: 53px 54px 68px 46px 1fr; }
.annotation .body { grid-template-columns: 58px 72px 1fr; }
.layers .body { grid-template-columns: 77px 1fr; }
.block .body { grid-template-columns: 52px 1fr; }
.properties .body { grid-template-columns: 77px 1fr; }
.groups .body { grid-template-columns: 51px 1fr; }
.utilities .body { grid-template-columns: 88px 1fr; }
.clipboard .body { grid-template-columns: 66px 1fr; }
.viewp .body { grid-template-columns: 77px; }

.big { display: flex; flex-direction: column; align-items: center; padding-top: 6px; min-width: 0; }
.big .lb { line-height: 20px; margin-top: 6px; text-align: center; white-space: nowrap; }
.big .caret { margin-top: 4px; }
.big.insert { padding-top: 5px; }
.glyph-a { font: 48px/40px "Liberation Sans", sans-serif; color: #d2d2d2; height: 40px; }
.stack { display: grid; grid-auto-rows: 31px; align-content: start; padding-top: 4px; }
.pad3 { padding-left: 3px; } .pad5 { padding-left: 5px; } .pad7 { padding-left: 7px; } .pad9 { padding-left: 9px; }
.tool { display: flex; align-items: center; gap: 6px; white-space: nowrap; }
.tool .m4 { margin-left: 4px; }
.tool .push { margin-left: auto; margin-right: 18px; }
.grid-tools { grid-template-columns: 91px 88px 95px 1fr; grid-auto-rows: 31px; padding: 4px 0 0 7px; height: 100px; }
.sel { position: relative; }
.sel::before { content: ""; position: absolute; left: -5px; top: 1px; width: 29px; height: 28px; background: #2f5f86; border: 1px solid #62b5ee; }
.sel svg { position: relative; }

.layer-col { display: flex; flex-direction: column; padding-top: 6px; }
.combo { display: flex; align-items: center; background: #4b5567; border: 1px solid #2a313c; height: 27px; }
.layer-combo { width: 259px; gap: 5px; padding: 0 0 0 6px; }
.layer-combo .push { margin: 0 2px 0 auto; }
.num { margin-left: 2px; }
.swatch { width: 18px; height: 18px; background: #fff; border: 1px solid #222; }
.layer-row { display: flex; align-items: center; gap: 10px; height: 31px; padding-left: 4px; }
.layer-col .combo + .layer-row { margin-top: 1px; }
.lr-text { margin-left: -4px; }
.prop-grid { display: grid; grid-template-columns: 23px 172px; grid-auto-rows: 30px; padding: 7px 0 0 2px; align-items: start; }
.prop-grid svg { margin-top: 3px; }
.pc { width: 171px; height: 27px; padding: 0 4px 0 5px; gap: 2px; }
.pc .push { margin-left: auto; }
.big-sw { width: 20px; height: 22px; margin-left: 10px; border-color: #888; }
.bl-1 { margin-left: 10px; }
.ln { width: 80px; height: 1px; background: #fff; }
.clip-stack { grid-auto-rows: 33px; }

/* document tabs */
.doc-tabs { height: 33px; display: flex; align-items: flex-end; gap: 2px; padding-left: 26px; }
.dtab { height: 27px; line-height: 27px; position: relative; }
.start { width: 154px; padding-left: 13px; background: #313947; color: #b8bec7; clip-path: path("M0 27C9 27 7 0 20 0H138C150 0 148 27 154 27Z"); }
.cur { width: 159px; padding-left: 11px; background: #3b4453; color: #dfe4ea; clip-path: path("M0 27C6 27 4 0 16 0H140C152 0 150 27 159 27Z"); display: flex; align-items: center; }
.dx { margin-left: auto; margin-right: 23px; }
.plus { width: 26px; height: 18px; margin-bottom: 3px; line-height: 17px; text-align: center; font-size: 17px; font-weight: 600; color: #aab0b9; background: #303846; border-radius: 7px 5px 5px 7px; }
.strip { height: 5px; background: #3b4453; }

/* drawing canvas */
.canvas { height: 757px; position: relative; overflow: hidden; background-color: #212830;
  background-image: linear-gradient(90deg, #323a48 1px, transparent 1px), linear-gradient(#323a48 1px, transparent 1px), linear-gradient(90deg, #272e39 1px, transparent 1px), linear-gradient(#272e39 1px, transparent 1px);
  background-size: 56.850px 56.850px, 56.850px 56.850px, 11.370px 11.370px, 11.370px 11.370px;
  background-position: 48.500px 10.500px, 48.500px 10.500px, 3px 10.500px, 3px 10.500px; }
.cad { position: absolute; left: 0; top: 0; }
.cad path { fill: none; }
.c-w { stroke: #f2f2f2; stroke-width: 1; }
.c-w2 { stroke: #dcdcdc; stroke-width: 1.500; }
.c-g { stroke: #16d016; stroke-width: 1.400; }
.c-y { stroke: #c8c81e; stroke-width: 1.300; }
.c-r { stroke: #e01414; stroke-width: 1.400; }
.c-red { stroke: #5c2a33; stroke-width: 1; }
.t { font: 31.600px "Liberation Sans", sans-serif; fill: #f4f4f4; }
.t-v { font: 24px "Liberation Sans", sans-serif; fill: #f4f4f4; }
.s { font: 15.600px "Liberation Sans", sans-serif; fill: #f0f0f0; }
.vp-label { position: absolute; left: 3px; top: 7px; color: #e4e7ea; font-size: 14.500px; line-height: 18px; }
.vp-ctrl { position: absolute; left: 1834px; top: 13px; display: flex; gap: 13px; align-items: center; }
.viewcube { position: absolute; left: 1750px; top: 46px; }
.vc-ring { fill: none; stroke: #484d57; stroke-width: 13; }
.vc-l { font: bold 22px "Liberation Sans", sans-serif; fill: #a6a9ae; text-anchor: middle; }
.vc-top { font: bold 14px "Open Sans", sans-serif; fill: #4c505a; text-anchor: middle; }
.vc-wcs { font: 12px "Liberation Sans", sans-serif; fill: #4a4e58; }
.navbar { position: absolute; left: 1866px; top: 261px; }
.cmdline { position: absolute; left: 384px; top: 724px; display: flex; height: 33px; }
.cmd-tools { width: 70px; height: 33px; display: flex; align-items: center; background: #2a323e; padding-left: 5px; gap: 7px; border-radius: 3px 0 0 0; }
.cmd-tools svg:last-child { margin-left: 7px; }
.grip { width: 6px; height: 21px; background-image: radial-gradient(#c0c0c0 1px, transparent 1.300px); background-size: 3px 3px; }
.cmd-input { width: 1082px; height: 32px; display: flex; align-items: center; padding-left: 5px; background: #bdbdbd; border-radius: 2px; }
.cmd-c { margin-left: 3px; border-top-color: #444; border-left-width: 4px; border-right-width: 4px; border-top-width: 5px; }
.cmd-text { margin-left: 10px; font: italic 14.800px "Liberation Mono", monospace; color: #5a5a5a; }
.cmd-up { margin-left: auto; margin-right: 5px; width: 0; height: 0; border-left: 5px solid transparent; border-right: 5px solid transparent; border-bottom: 6px solid #555; }
.scroll { position: absolute; left: 1909px; top: 0; width: 9px; height: 757px; background: #b5d3f0; border-right: 1px solid #38c8f0; }
.scroll i { display: block; height: 90px; background: #e0ebf5; }

/* bottom */
.bottom { height: 59px; border-top: 1px solid #414957; display: flex; flex-direction: column; }
.layout-tabs { height: 26px; display: flex; gap: 4px; padding-left: 16px; align-items: flex-start; font-size: 13.500px; }
.ltab { width: 77px; height: 22px; padding-left: 13px; line-height: 22px; background: #2d3542; color: #b8bec7; border-radius: 0 0 7px 7px; }
.ltab.on { width: 68px; font-weight: 700; color: #eef1f4; background: #3b4453; }
.ltab.add { width: 26px; padding: 0; margin-left: 4px; text-align: center; font-size: 17px; font-weight: 600; }
.status { height: 30px; display: flex; justify-content: flex-end; gap: 3px; margin-top: 1px; }
.sp { display: flex; align-items: center; background: #353d4b; height: 30px; }
.sp.g1 { margin-left: -2px; }
.w59 { width: 59px; justify-content: center; }
.w60 { width: 60px; }
.thin { width: 5px; }
.model { font-size: 14.500px; color: #e8ecf0; }
.st { width: 30px; height: 30px; display: flex; align-items: center; justify-content: center; flex: none; }
.st.act { background: #5b8dc2; }
.st.w29 { width: 29px; }
.st.c { width: 20px; }
.st.c.n18 { width: 18px; }
.st.c.n19 { width: 19px; }
.st.w31 { width: 31px; }
.st.w24 { width: 24px; }
.st.c.w17 { width: 17px; }
.scale { font-size: 13.500px; color: #e4e7ea; }

/* taskbar */
.taskbar { height: 50px; display: flex; background: linear-gradient(90deg, #efefef 0, #e9ecec 22%, #d6e5ea 36%, #d6e4e9 60%, #d5e3e8 100%); color: #111; }
.tb-win { width: 60px; display: flex; align-items: center; justify-content: center; }
.tb-search { width: 429px; height: 50px; display: flex; align-items: center; padding-left: 15px; gap: 14px; background: #fff; border: 1px solid #cfcfcf; font-size: 17.700px; color: #2b2b2b; }
.tb-apps { display: flex; }
.tapp { width: 62.400px; height: 50px; display: flex; align-items: center; justify-content: center; position: relative; }
.tapp.run::after { content: ""; position: absolute; left: 6px; right: 6px; bottom: 0; height: 3px; background: #0a78d7; }
.tapp.tail::after { right: 3px; background: linear-gradient(90deg, #0a78d7 80%, #6fb2e8 80%); }
.tapp.focus { background: #f1f6f7; }
.tapp.focus::after { left: 0; right: 0; }
.wd { font: bold 12px "Liberation Sans", sans-serif; fill: #fff; text-anchor: middle; }
.tray { margin-left: auto; width: 346px; display: grid; grid-template-columns: 28px 30px 33px 27px 39px 33px 88px 17px 51px; align-items: center; justify-items: start; }
.lang { font-size: 14px; color: #222; }
.clock { display: flex; flex-direction: column; align-items: center; justify-self: center; line-height: 23px; font-size: 14px; color: #222; white-space: nowrap; }
.notif { grid-column: 9; position: relative; width: 30px; height: 30px; }
.notif b { position: absolute; left: 9px; top: 9px; width: 21px; height: 21px; border-radius: 50%; border: 1px solid #666; background: #c9d3d7; text-align: center; font-weight: 400; font-size: 14px; line-height: 19px; }
```
